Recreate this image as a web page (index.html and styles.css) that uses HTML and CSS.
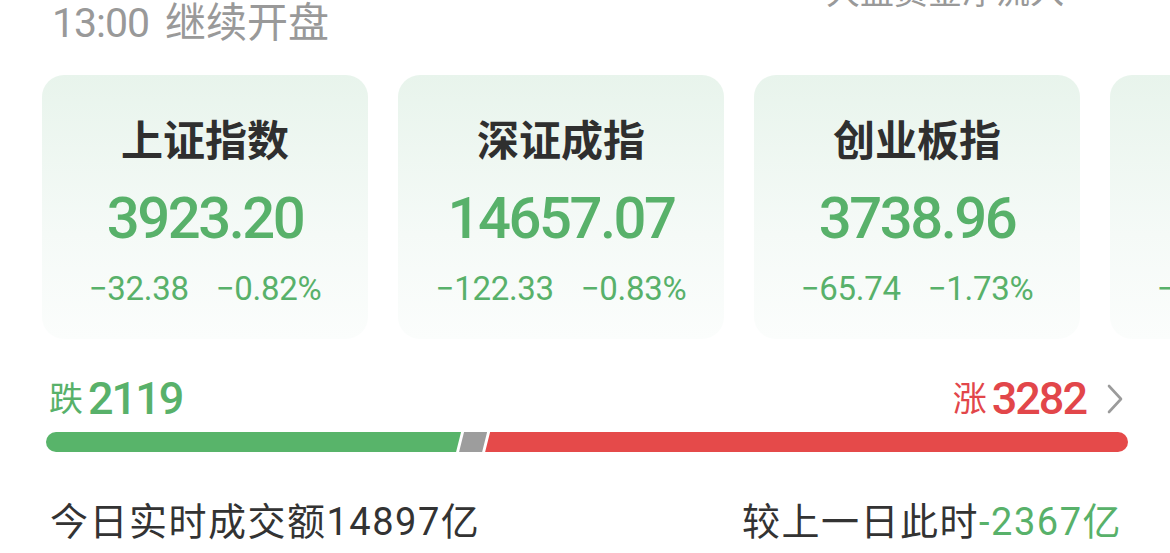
FILE: index.html
```html
<!DOCTYPE html>
<html lang="zh-CN">
<head>
    <meta charset="UTF-8">
    <meta name="viewport" content="width=device-width, initial-scale=1.0">
    <title>大盘</title>
    <link rel="stylesheet" href="styles.css">
</head>
<body>
    <div class="topBar">
        <p class="status"><span class="time">13:00</span>继续开盘</p>
        <p class="flow">大盘资金净流入</p>
    </div>

    <ul class="indexList">
        <li class="card">
            <p class="name">上证指数</p>
            <p class="price">3923.20</p>
            <p class="change"><span>−32.38</span><span>−0.82%</span></p>
        </li>
        <li class="card">
            <p class="name">深证成指</p>
            <p class="price">14657.07</p>
            <p class="change"><span>−122.33</span><span>−0.83%</span></p>
        </li>
        <li class="card">
            <p class="name">创业板指</p>
            <p class="price">3738.96</p>
            <p class="change"><span>−65.74</span><span>−1.73%</span></p>
        </li>
        <li class="card">
            <p class="name">北证50</p>
            <p class="price">1456.82</p>
            <p class="change"><span>−12.35</span><span>−0.84%</span></p>
        </li>
    </ul>

    <div class="breadth">
        <div class="counts">
            <p class="down">跌<b>2119</b></p>
            <p class="up">涨<b>3282</b>
                <svg class="arrow" width="18" height="30" viewBox="0 0 18 30">
                    <path d="M3 2 L15 15 L3 28" fill="none" stroke="#9b9b9b" stroke-width="2.6" stroke-linecap="round" stroke-linejoin="round"/>
                </svg>
            </p>
        </div>
        <div class="bar">
            <span class="seg fall" style="flex-grow: 2119"></span>
            <span class="seg flat" style="flex-grow: 143"></span>
            <span class="seg rise" style="flex-grow: 3282"></span>
        </div>
    </div>

    <div class="volume">
        <p>今日实时成交额14897亿</p>
        <p>较上一日此时<span class="minus">-2367亿</span></p>
    </div>
</body>
</html>
```

FILE: styles.css
```css
/* 기본 */
* {
    box-sizing: border-box;
}

body {
    margin: 0;
    width: 1170px;
    height: 553px;
    overflow: hidden;
    background-color: #fff;
    font-family: Roboto, "Noto Sans CJK SC", sans-serif;
    color: #333;
}

p {
    margin: 0;
}

/* 상단 - 시간 / 자금 흐름 */
.topBar {
    display: flex;
    justify-content: space-between;
    align-items: flex-start;
    padding: 0 106px 0 52px;
    height: 75px;
}

.status {
    font-size: 41px;
    line-height: 46px;
    color: #999;
}

.status .time {
    margin-right: 16px;
    letter-spacing: -1px;
}

.flow {
    margin-top: -28px;
    font-size: 34px;
    line-height: 40px;
    color: #999;
}

/* 지수 카드 */
.indexList {
    display: flex;
    gap: 30px;
    margin: 0;
    padding: 0 0 0 42px;
    list-style-type: none;
}

.card {
    flex: 0 0 326px;
    height: 264px;
    padding-top: 43px;
    border-radius: 22px;
    background: linear-gradient(180deg, #e8f4ec 0%, #f5faf7 60%, #fbfdfc 100%);
    text-align: center;
}

.card .name {
    font-size: 42px;
    line-height: 48px;
    font-weight: 700;
    color: #2f2f2f;
}

.card .price {
    margin-top: 17px;
    font-size: 58px;
    line-height: 70px;
    font-weight: 500;
    letter-spacing: -2.5px;
    color: #58b16a;
}

.card .change {
    margin-top: 16px;
    font-size: 33px;
    line-height: 40px;
    color: #58b16a;
    letter-spacing: -0.3px;
}

.card .change span + span {
    margin-left: 27px;
}

/* 涨跌 분포 */
.breadth {
    margin-top: 35px;
    padding: 0 42px 0 46px;
}

.counts {
    display: flex;
    justify-content: space-between;
    align-items: center;
    height: 50px;
}

.counts p {
    display: flex;
    align-items: center;
    font-size: 34px;
    line-height: 50px;
}

.counts b {
    margin-left: 5px;
    font-size: 45px;
    font-weight: 500;
    letter-spacing: -2px;
}

.down {
    padding-left: 3px;
    color: #58b16a;
}

.up {
    color: #e2464a;
}

.up .arrow {
    margin-left: 20px;
    margin-right: 4px;
}

.bar {
    display: flex;
    height: 20px;
    margin-top: 8px;
}

.seg {
    flex-basis: 0;
    height: 100%;
}

/* 사선 경계 - clip-path 로 자르기 */
.fall {
    background-color: #58b46a;
    border-radius: 10px 0 0 10px;
    clip-path: polygon(0 0, 100% 0, calc(100% - 5px) 100%, 0 100%);
}

.flat {
    margin-left: -2px;
    background-color: #9d9d9d;
    clip-path: polygon(5px 0, 100% 0, calc(100% - 5px) 100%, 0 100%);
}

.rise {
    margin-left: -2px;
    background-color: #e54a4a;
    border-radius: 0 10px 10px 0;
    clip-path: polygon(5px 0, 100% 0, 100% 100%, 0 100%);
}

/* 성교액 */
.volume {
    display: flex;
    justify-content: space-between;
    margin-top: 48px;
    padding: 0 48px 0 50px;
    font-size: 38px;
    line-height: 44px;
    letter-spacing: 1.5px;
    color: #333;
}

.volume .minus {
    color: #58b16a;
}
```
